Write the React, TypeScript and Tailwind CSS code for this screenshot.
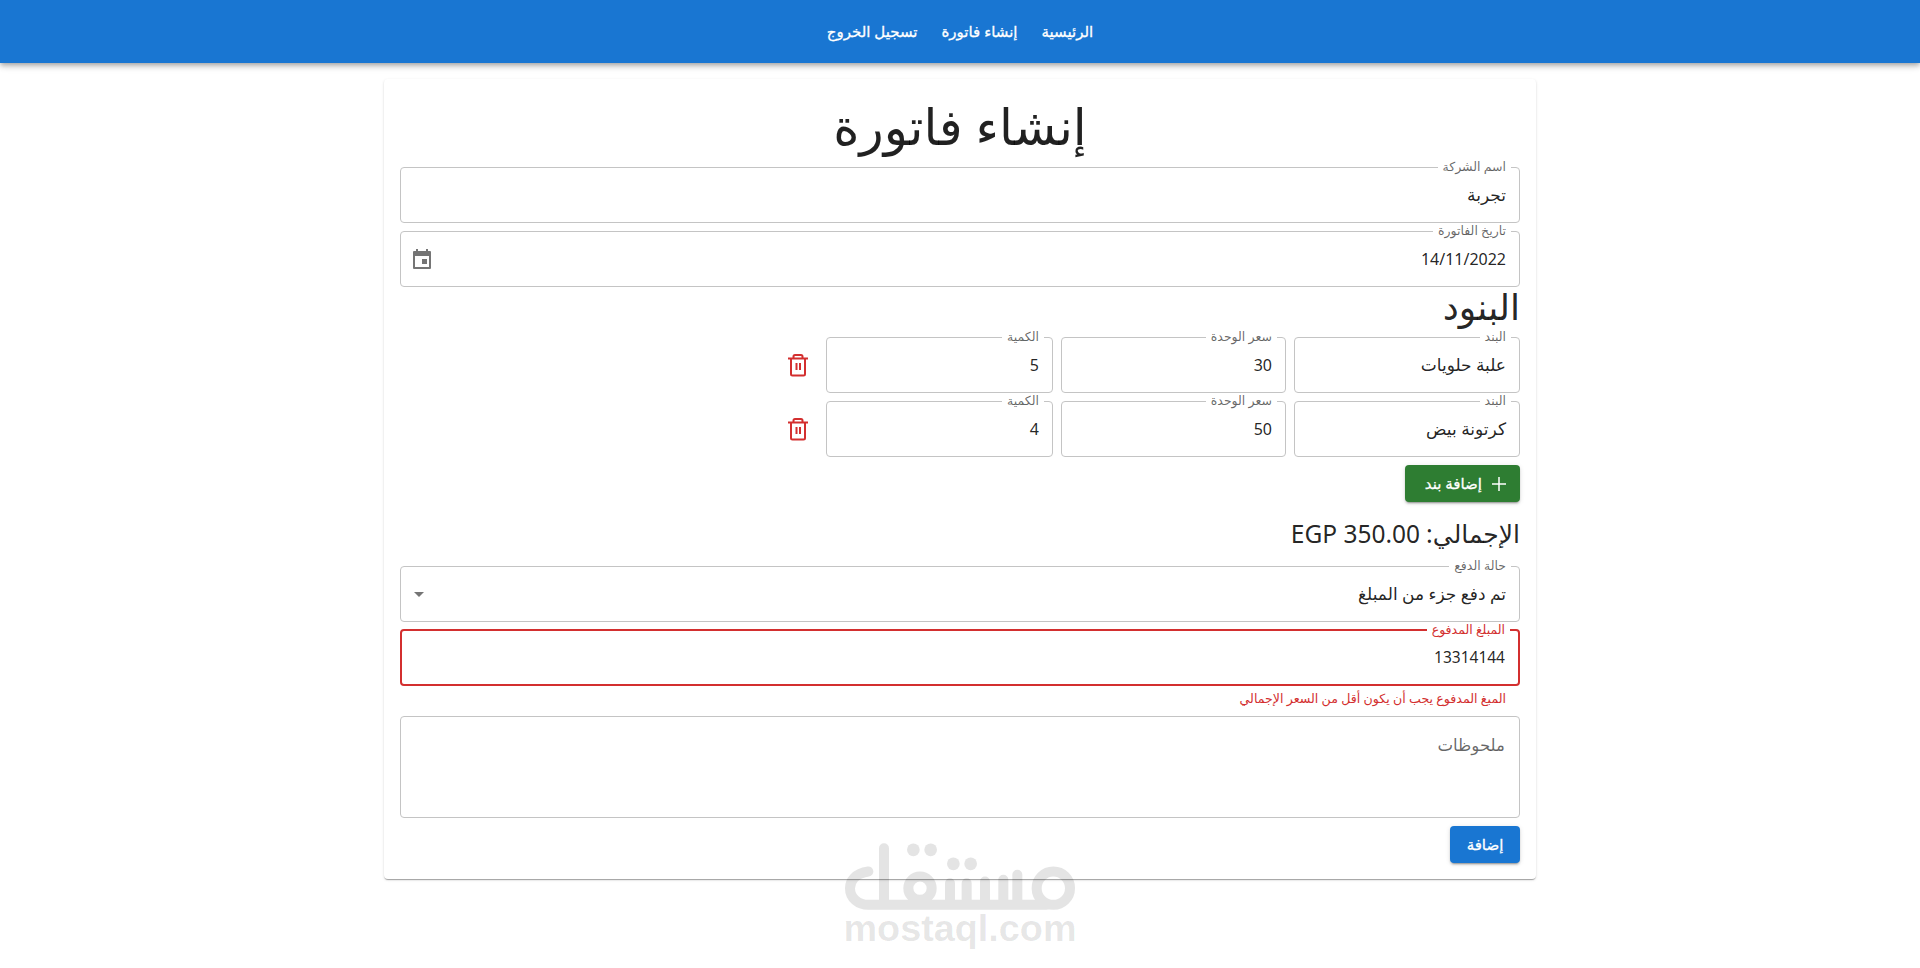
import React from "react";

const FONT = "font-['Noto_Sans','DejaVu_Sans',sans-serif]";

function Field({
  label,
  children,
  error,
  className = "",
}: {
  label: string;
  children: React.ReactNode;
  error?: boolean;
  className?: string;
}) {
  return (
    <fieldset
      className={`flex h-[61px] min-w-0 items-center rounded px-2 pb-1 ${
        error ? "border-2 border-[#d32f2f]" : "border border-[#c4c4c4]"
      } ${className}`}
    >
      <legend className={`px-[5px] text-[12.5px] leading-[10px] ${error ? "text-[#d32f2f]" : "text-[#00000099]"}`}>{label}</legend>
      <div className="flex w-full items-center justify-between px-[5px] text-[17px] text-[#000000de]">{children}</div>
    </fieldset>
  );
}

function TrashIcon() {
  return (
    <svg width="24" height="24" viewBox="0 0 24 24" fill="none" stroke="#d32f2f" strokeWidth="2">
      <path d="M2 5.5h20" />
      <path d="M7.5 5V3.5A1.5 1.5 0 0 1 9 2h6a1.5 1.5 0 0 1 1.5 1.5V5" />
      <path d="M5 6v15a1.5 1.5 0 0 0 1.5 1.5h11A1.5 1.5 0 0 0 19 21V6" />
      <path d="M10.5 10v7M14 10v7" />
    </svg>
  );
}

function CalendarIcon() {
  return (
    <svg width="20" height="22" viewBox="0 0 20 22" fill="#757575" className="ml-[-2px]">
      <path d="M4 1h2v2h8V1h2v2h2a1 1 0 0 1 1 1v16a1 1 0 0 1-1 1H2a1 1 0 0 1-1-1V4a1 1 0 0 1 1-1h2zM3 8v11h14V8z" fillRule="evenodd" />
      <rect x="10" y="11" width="5" height="5" />
    </svg>
  );
}

function ItemRow({ name, price, qty, className = "" }: { name: string; price: string; qty: string; className?: string }) {
  return (
    <div className={`flex items-end gap-2 ${className}`}>
      <Field label="البند" className="w-[226px]">
        <span>{name}</span>
      </Field>
      <Field label="سعر الوحدة" className="w-[225px]">
        <span className="text-base">{price}</span>
      </Field>
      <Field label="الكمية" className="w-[227px]">
        <span className="text-base">{qty}</span>
      </Field>
      <div className="flex h-14 w-10 items-center justify-center">
        <TrashIcon />
      </div>
    </div>
  );
}

function Watermark() {
  return (
    <div className="pointer-events-none absolute left-[845px] top-[843px] flex w-[230px] flex-col items-center" dir="ltr">
      <svg width="230" height="67" viewBox="255 130 690 200" fill="none">
        <g stroke="#000" strokeWidth="30" strokeLinecap="round" opacity="0.1">
          <path d="M372 145V300" />
          <path d="M325 215C285 220 270 245 270 265C270 295 295 315 325 315H860" />
          <circle cx="480" cy="265" r="35" />
          <path d="M570 300V250M620 300V250M675 300V245M730 300V240M772 300V225" />
          <circle cx="880" cy="265" r="50" />
          <g fill="#000" stroke="none">
            <circle cx="460" cy="150" r="19" />
            <circle cx="512" cy="150" r="19" />
            <circle cx="580" cy="192" r="19" />
            <circle cx="632" cy="192" r="19" />
          </g>
        </g>
      </svg>
      <div className="mt-[-2px] font-['Liberation_Sans',sans-serif] text-[37.8px] font-bold leading-[40px] text-[#0000001a]">mostaql.com</div>
    </div>
  );
}

export default function App() {
  return (
    <div dir="rtl" className={`relative h-[968px] overflow-hidden bg-white ${FONT}`}>
      <header className="flex h-[63px] items-center justify-center gap-6 bg-[#1976d2] text-[15px] text-white shadow-[0_2px_4px_-1px_#0003,0_4px_5px_0_#00000024,0_1px_10px_0_#0000001f] [-webkit-text-stroke:0.3px_white]">
        <span>الرئيسية</span>
        <span>إنشاء فاتورة</span>
        <span>تسجيل الخروج</span>
      </header>
      <main className="mx-auto mt-4 w-[1152px] rounded bg-white p-4 shadow-[0_2px_1px_-1px_#0003,0_1px_1px_0_#00000024,0_1px_3px_0_#0000001f]">
        <h1 className="flex h-[67px] items-center justify-center pb-1 text-[50px] font-normal text-[#000000de]">إنشاء فاتورة</h1>
        <Field label="اسم الشركة">
          <span>تجربة</span>
        </Field>
        <Field label="تاريخ الفاتورة" className="mt-[3px]">
          <span className="text-base">14/11/2022</span>
          <CalendarIcon />
        </Field>
        <h2 className="flex h-[45px] items-center pb-1.5 text-[36px] font-normal leading-none text-[#000000de]">البنود</h2>
        <ItemRow name="علبة حلويات" price="30" qty="5" />
        <ItemRow name="كرتونة بيض" price="50" qty="4" className="mt-[3px]" />
        <div className="mt-2 flex">
          <button className="flex h-[37px] w-[115px] items-center gap-2 rounded bg-[#2e7d32] pr-3 text-[15px] text-white shadow-[0_3px_1px_-2px_#0003,0_2px_2px_0_#00000024,0_1px_5px_0_#0000001f] [-webkit-text-stroke:0.3px_white]">
            <svg width="18" height="18" viewBox="0 0 18 18" stroke="#fff" strokeWidth="1.5">
              <path d="M9 2v14M2 9h14" />
            </svg>
            <span>إضافة بند</span>
          </button>
        </div>
        <div className="flex h-[59px] items-center pt-[5px] text-[25px] text-[#000000de]">
          <span>الإجمالي: </span>
          <span dir="ltr" className="mr-1.5 text-[24.5px]">EGP 350.00</span>
        </div>
        <Field label="حالة الدفع">
          <span>تم دفع جزء من المبلغ</span>
          <svg width="10" height="5" viewBox="0 0 10 5" fill="#757575">
            <path d="M0 0h10L5 5z" />
          </svg>
        </Field>
        <Field label="المبلغ المدفوع" error className="mt-[3px]">
          <span className="text-[15.5px]">13314144</span>
        </Field>
        <p className="flex h-[30px] items-center px-[14px] pb-1 text-[12.6px] text-[#d32f2f]">المبغ المدفوع يجب أن يكون أقل من السعر الإجمالي</p>
        <div className="h-[102px] rounded border border-[#c4c4c4] px-[14px] pt-4 text-[16.6px] text-[#00000099]">ملحوظات</div>
        <div className="mt-2 flex">
          <button className="flex h-[37px] w-[70px] items-center justify-center rounded bg-[#1976d2] text-[15px] text-white shadow-[0_3px_1px_-2px_#0003,0_2px_2px_0_#00000024,0_1px_5px_0_#0000001f] [-webkit-text-stroke:0.3px_white]">
            إضافة
          </button>
        </div>
      </main>
      <Watermark />
    </div>
  );
}
